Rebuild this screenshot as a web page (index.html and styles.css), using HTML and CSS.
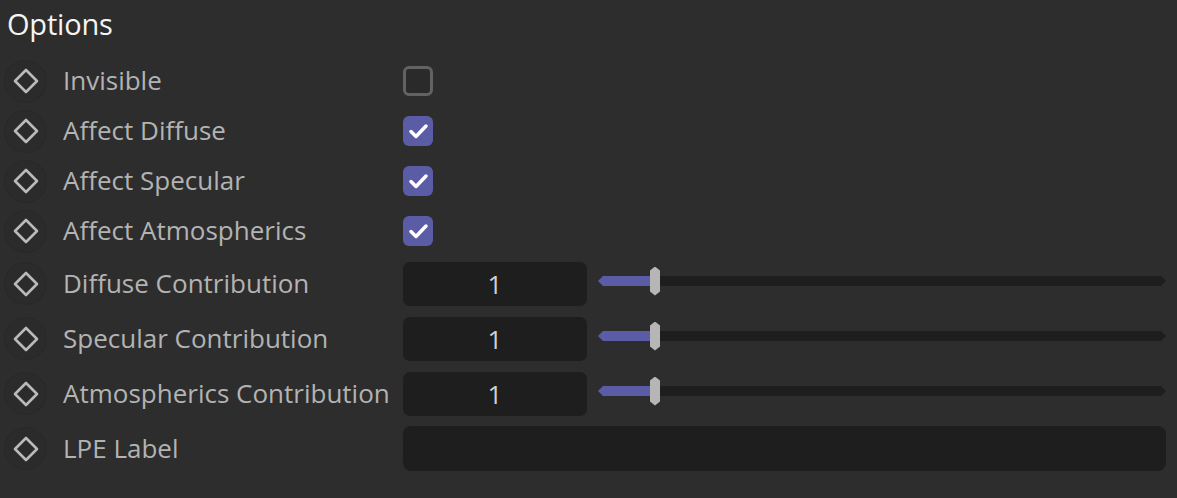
FILE: index.html
```html
<!DOCTYPE html>
<html>
<head>
<meta charset="utf-8">
<link rel="stylesheet" href="styles.css">
</head>
<body>
<div class="panel">
  <div class="title">Options</div>

  <div class="row">
    <div class="key"><svg viewBox="0 0 26 26" width="26" height="26"><path d="M13 2 L24 13 L13 24 L2 13 Z" /></svg></div>
    <div class="label">Invisible</div>
    <div class="ctrl"><span class="check"></span></div>
  </div>
  <div class="row">
    <div class="key"><svg viewBox="0 0 26 26" width="26" height="26"><path d="M13 2 L24 13 L13 24 L2 13 Z" /></svg></div>
    <div class="label">Affect Diffuse</div>
    <div class="ctrl"><span class="check on"><svg viewBox="0 0 30 30" width="30" height="30"><path d="M8 15.5 L13 20.5 L23 10" /></svg></span></div>
  </div>
  <div class="row">
    <div class="key"><svg viewBox="0 0 26 26" width="26" height="26"><path d="M13 2 L24 13 L13 24 L2 13 Z" /></svg></div>
    <div class="label">Affect Specular</div>
    <div class="ctrl"><span class="check on"><svg viewBox="0 0 30 30" width="30" height="30"><path d="M8 15.5 L13 20.5 L23 10" /></svg></span></div>
  </div>
  <div class="row">
    <div class="key"><svg viewBox="0 0 26 26" width="26" height="26"><path d="M13 2 L24 13 L13 24 L2 13 Z" /></svg></div>
    <div class="label">Affect Atmospherics</div>
    <div class="ctrl"><span class="check on"><svg viewBox="0 0 30 30" width="30" height="30"><path d="M8 15.5 L13 20.5 L23 10" /></svg></span></div>
  </div>

  <div class="row tall">
    <div class="key"><svg viewBox="0 0 26 26" width="26" height="26"><path d="M13 2 L24 13 L13 24 L2 13 Z" /></svg></div>
    <div class="label">Diffuse Contribution</div>
    <div class="ctrl">
      <div class="num">1</div>
      <div class="slider"><div class="fill"></div><div class="thumb"></div><div class="track"></div></div>
    </div>
  </div>
  <div class="row tall">
    <div class="key"><svg viewBox="0 0 26 26" width="26" height="26"><path d="M13 2 L24 13 L13 24 L2 13 Z" /></svg></div>
    <div class="label">Specular Contribution</div>
    <div class="ctrl">
      <div class="num">1</div>
      <div class="slider"><div class="fill"></div><div class="thumb"></div><div class="track"></div></div>
    </div>
  </div>
  <div class="row tall">
    <div class="key"><svg viewBox="0 0 26 26" width="26" height="26"><path d="M13 2 L24 13 L13 24 L2 13 Z" /></svg></div>
    <div class="label">Atmospherics Contribution</div>
    <div class="ctrl">
      <div class="num">1</div>
      <div class="slider"><div class="fill"></div><div class="thumb"></div><div class="track"></div></div>
    </div>
  </div>
  <div class="row tall">
    <div class="key"><svg viewBox="0 0 26 26" width="26" height="26"><path d="M13 2 L24 13 L13 24 L2 13 Z" /></svg></div>
    <div class="label">LPE Label</div>
    <div class="ctrl"><div class="text-field"></div></div>
  </div>
</div>
</body>
</html>
```

FILE: styles.css
```css
html, body {
  margin: 0;
  padding: 0;
  background: #2d2d2d;
  height: 100%;
}
body {
  font-family: "Open Sans", "Noto Sans", sans-serif;
  overflow: hidden;
}
.panel {
  padding: 0 11px 0 5px;
}
.title {
  height: 56px;
  box-sizing: border-box;
  padding: 5px 0 0 2px;
  color: #f4f4f4;
  font-size: 29px;
  line-height: 38px;
  letter-spacing: -0.2px;
}
.row {
  display: flex;
  align-items: center;
  height: 50px;
}
.row.tall {
  height: 55px;
}
.key {
  width: 41px;
  height: 41px;
  border-radius: 50%;
  background: #2b2b2b;
  box-shadow: 0 0 0 1px #292929;
  display: flex;
  align-items: center;
  justify-content: center;
  flex: none;
}
.key svg {
  display: block;
}
.key svg path {
  fill: none;
  stroke: #bababa;
  stroke-width: 2.6;
  stroke-linejoin: round;
}
.label {
  width: 340px;
  margin-left: 17px;
  margin-top: -2px;
  color: #b3b3b3;
  font-size: 26px;
  letter-spacing: 0;
  white-space: nowrap;
  flex: none;
}
.ctrl {
  flex: 1;
  display: flex;
  align-items: center;
  gap: 11px;
}
.check {
  width: 30px;
  height: 30px;
  box-sizing: border-box;
  border-radius: 6px;
  border: 3px solid #626262;
  background: #2a2a2a;
  display: block;
}
.check.on {
  border: none;
  background: #5b5ca6;
}
.check svg {
  display: block;
}
.check svg path {
  fill: none;
  stroke: #ffffff;
  stroke-width: 3.5;
  stroke-linecap: round;
  stroke-linejoin: round;
}
.num {
  width: 184px;
  height: 44px;
  border-radius: 7px;
  background: #1e1e1e;
  color: #d0d0d0;
  font-size: 26px;
  line-height: 44px;
  text-align: center;
  flex: none;
}
.slider {
  flex: 1;
  display: flex;
  align-items: center;
  height: 30px;
  margin-bottom: 5px;
}
.fill {
  width: 52px;
  height: 10px;
  background: #5b5ca6;
  clip-path: polygon(0 50%, 5px 0, 100% 0, 100% 100%, 5px 100%);
  flex: none;
}
.thumb {
  width: 10px;
  height: 29px;
  background: #b6b6b6;
  clip-path: polygon(50% 0, 100% 4px, 100% calc(100% - 4px), 50% 100%, 0 calc(100% - 4px), 0 4px);
  flex: none;
}
.track {
  flex: 1;
  height: 10px;
  background: #1e1e1e;
  clip-path: polygon(0 0, calc(100% - 5px) 0, 100% 50%, calc(100% - 5px) 100%, 0 100%);
}
.text-field {
  flex: 1;
  height: 45px;
  border-radius: 8px;
  background: #1e1e1e;
}
```
